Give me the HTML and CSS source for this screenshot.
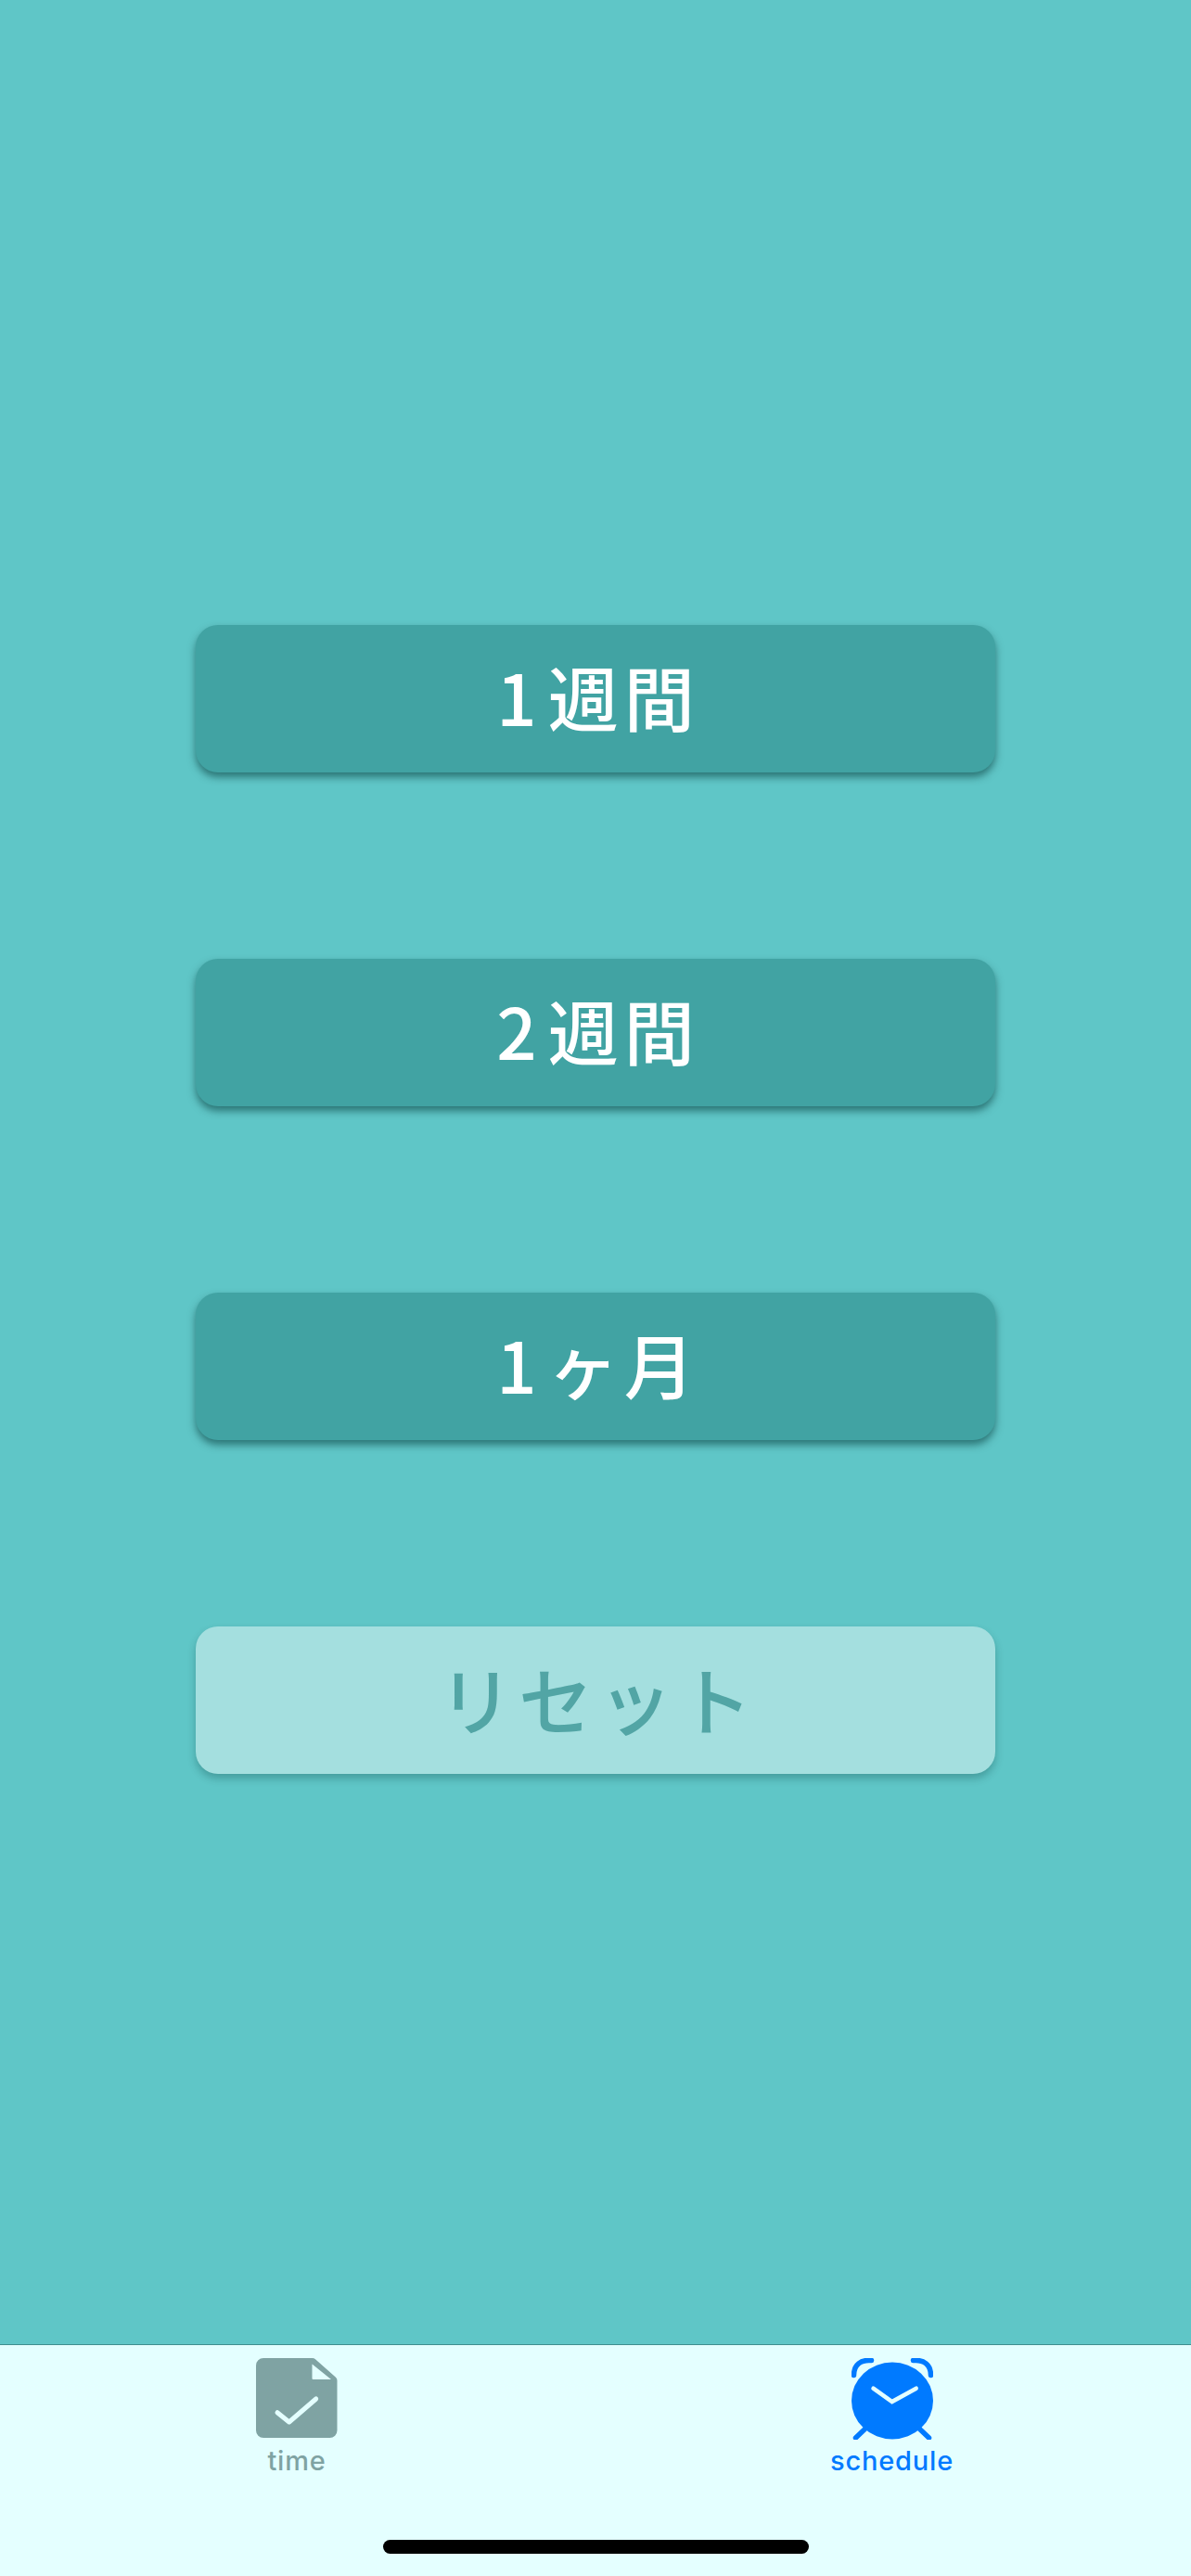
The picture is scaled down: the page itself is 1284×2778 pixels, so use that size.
FILE: index.html
```html
<!DOCTYPE html>
<html lang="ja">
<head>
<meta charset="utf-8">
<title>schedule</title>
<link rel="stylesheet" href="styles.css">
</head>
<body>
<div class="screen">
  <main class="content">
    <button class="action"><span class="digit">1</span>週間</button>
    <button class="action"><span class="digit">2</span>週間</button>
    <button class="action"><span class="digit">1</span>ヶ月</button>
    <button class="action action-reset"><span class="reset-label">リセット</span></button>
  </main>
  <footer class="tabbar">
    <nav class="tabs">
      <div class="tab tab-first">
        <svg class="tab-icon" width="88" height="88" viewBox="0 0 88 88">
          <path class="doc-body" d="M8 0H60.500A5 5 0 0 1 64 1.300L86 20.800A5 5 0 0 1 87.500 24.500V78A8 8 0 0 1 79.500 86H8A8 8 0 0 1 0 78V8A8 8 0 0 1 8 0Z"/>
          <path class="doc-fold" d="M60.500 6.500L81 23H61.500A1 1 0 0 1 60.500 22Z"/>
          <path class="doc-check" d="M23 58.700L35.700 69L64.700 44"/>
        </svg>
        <span class="tab-label">time</span>
      </div>
      <div class="tab tab-active">
        <svg class="tab-icon" width="88" height="88" viewBox="0 0 88 88">
          <path class="clock-line" d="M2.500 18.500C2.500 7 10 1.500 21.500 2.500"/>
          <path class="clock-line" d="M85.500 18.500C85.500 7 78 1.500 66.500 2.500"/>
          <path class="clock-line" d="M4.500 86L15 76"/>
          <path class="clock-line" d="M83.500 86L73 76"/>
          <ellipse class="clock-face" cx="44" cy="46" rx="44" ry="41.500"/>
          <path class="clock-hands" d="M23.500 32.700L43.700 47L69.700 32.700"/>
        </svg>
        <span class="tab-label">schedule</span>
      </div>
    </nav>
    <div class="home-bar"></div>
  </footer>
</div>
</body>
</html>
```

FILE: styles.css
```css
* {
  box-sizing: border-box;
}

html,
body {
  margin: 0;
  padding: 0;
}

.screen {
  width: 1284px;
  height: 2778px;
  display: flex;
  flex-direction: column;
  background: #5fc6c7;
  overflow: hidden;
}

.content {
  flex: 1;
  display: flex;
  flex-direction: column;
  align-items: center;
  gap: 201px;
  padding-top: 674px;
}

.action {
  width: 862px;
  height: 159px;
  display: flex;
  align-items: center;
  justify-content: center;
  border: 0;
  border-radius: 24px;
  background: #41a3a3;
  color: #ffffff;
  font-family: "Noto Sans CJK JP", "Noto Sans", sans-serif;
  font-size: 76px;
  font-weight: 500;
  line-height: 1;
  letter-spacing: 6px;
  padding: 0 0 7px 6px;
  box-shadow: 0 5px 9px rgba(0, 50, 50, 0.55);
}

.digit {
  margin-right: 6px;
}

.action-reset {
  background: #a4dfdf;
  color: #52a5a5;
  box-shadow: 0 5px 9px rgba(0, 50, 50, 0.28);
}

.reset-label {
  font-size: 80px;
  letter-spacing: 6px;
}

.tabbar {
  height: 250px;
  display: flex;
  flex-direction: column;
  align-items: center;
  background: #e4ffff;
  border-top: 1px solid #3f8e8e;
}

.tabs {
  width: 100%;
  display: grid;
  grid-template-columns: 1fr 1fr;
  padding-top: 14px;
}

.tab {
  display: flex;
  flex-direction: column;
  align-items: center;
}

.tab-first {
  padding-right: 2px;
}

.tab-active {
  padding-right: 3px;
}

.tab-icon {
  display: block;
}

.tab-label {
  margin-top: 5px;
  font-family: Inter, "Liberation Sans", sans-serif;
  font-size: 29px;
  font-weight: 500;
  line-height: 35px;
  letter-spacing: 0.8px;
  color: #7fa3a3;
}

.tab-active .tab-label {
  color: #007aff;
}

.doc-body {
  fill: #7fa3a3;
}

.doc-fold {
  fill: #e4ffff;
}

.doc-check {
  fill: none;
  stroke: #e4ffff;
  stroke-width: 5px;
  stroke-linecap: round;
  stroke-linejoin: round;
}

.clock-face {
  fill: #007aff;
}

.clock-line {
  fill: none;
  stroke: #007aff;
  stroke-width: 5.500px;
  stroke-linecap: round;
}

.clock-hands {
  fill: none;
  stroke: #e4ffff;
  stroke-width: 4.500px;
  stroke-linecap: round;
  stroke-linejoin: miter;
}

.home-bar {
  width: 459px;
  height: 15px;
  margin-top: 68px;
  border-radius: 8px;
  background: #000000;
}
```
